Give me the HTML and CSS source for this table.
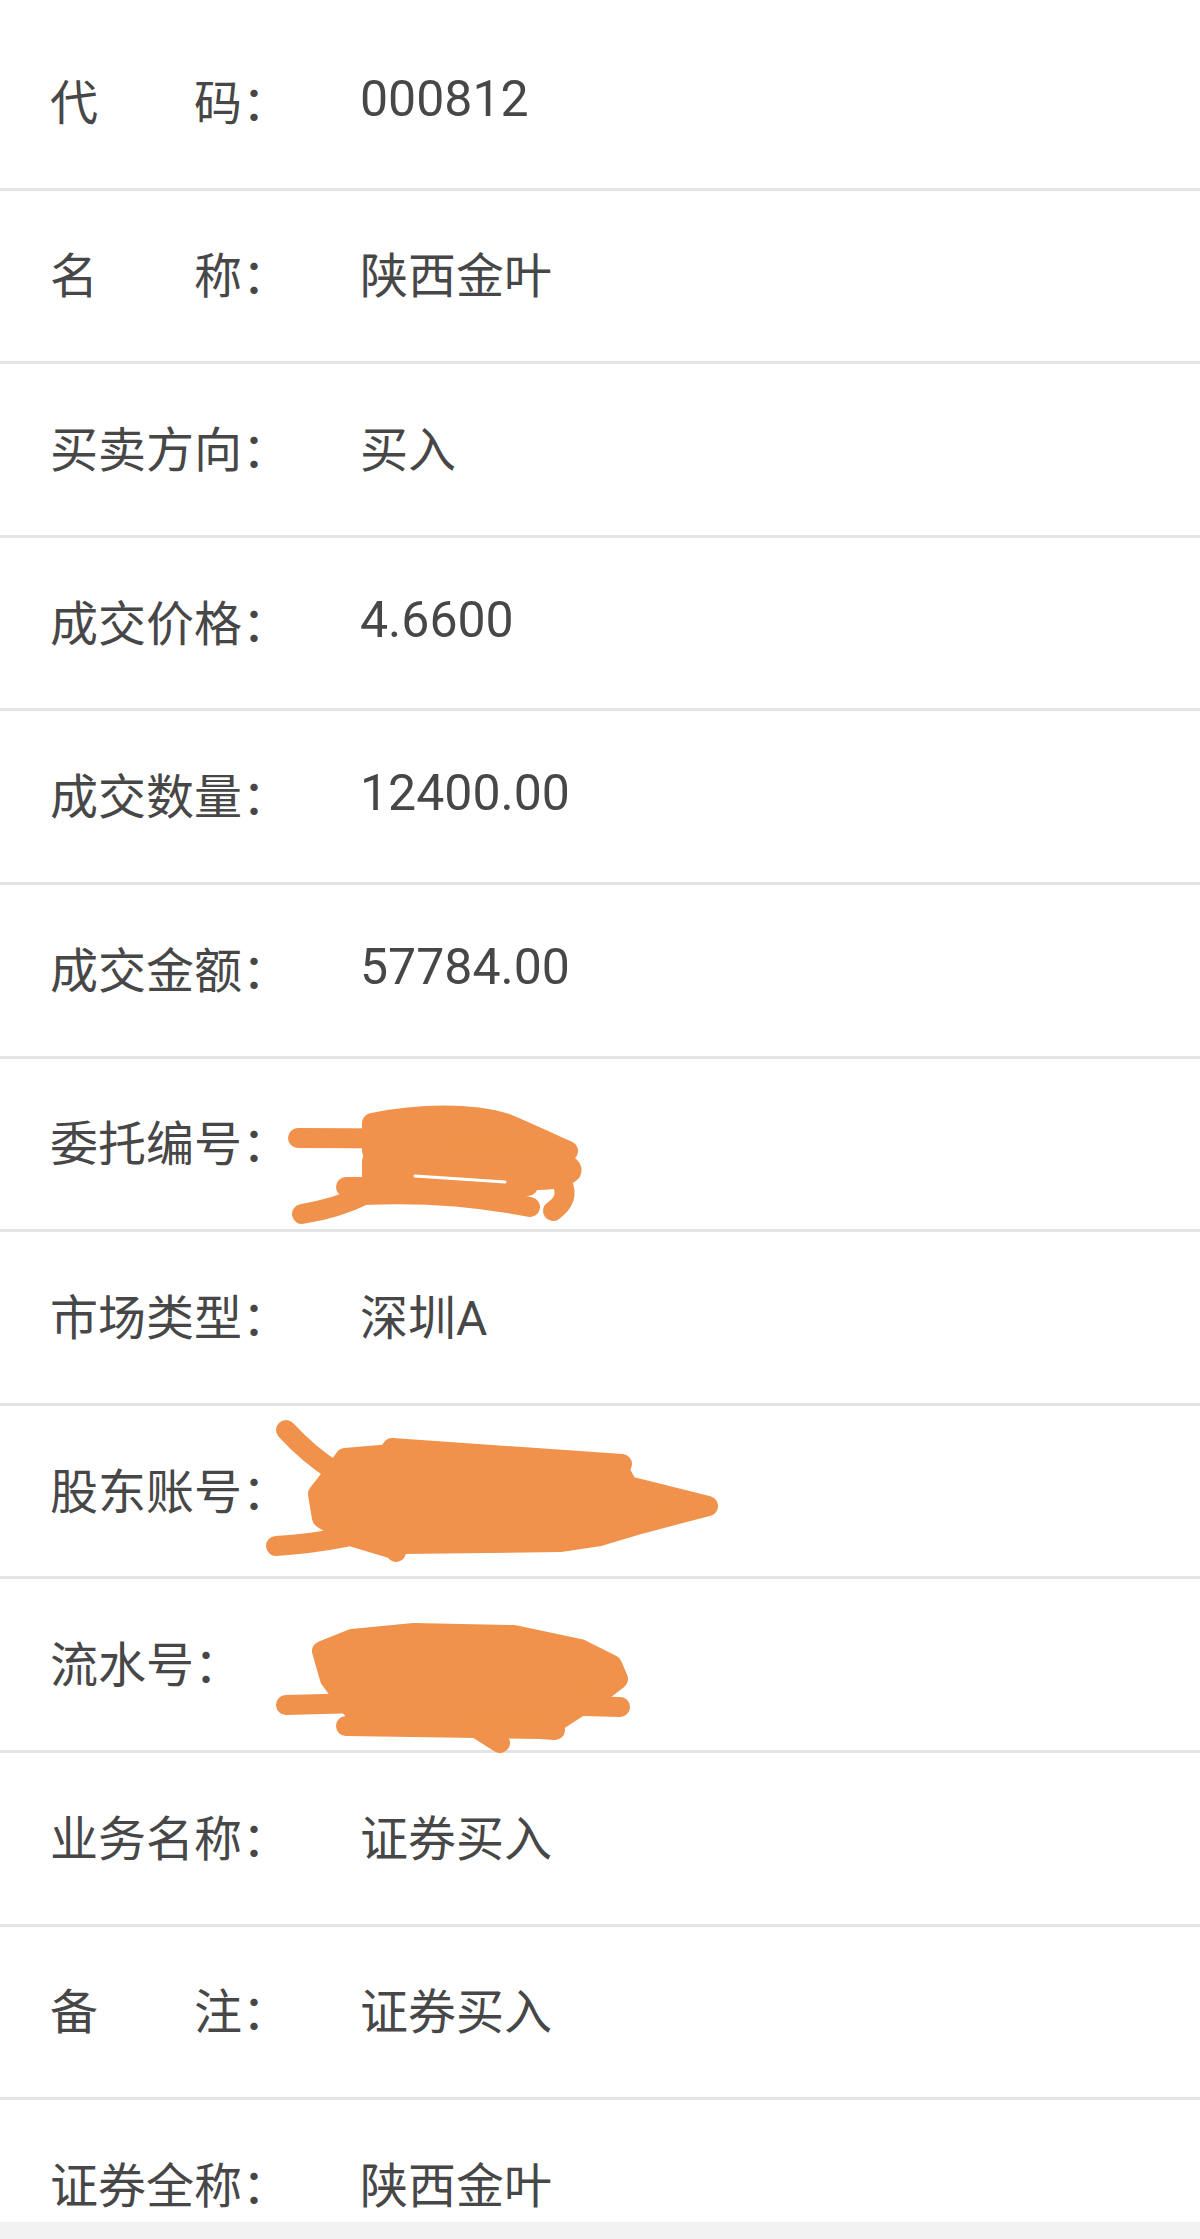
FILE: index.html
```html
<!DOCTYPE html>
<html lang="zh-CN">
<head>
<meta charset="utf-8">
<title>成交详情</title>
<link rel="stylesheet" href="styles.css">
</head>
<body>
<div class="screen">
  <div class="list">
    <div class="row"><span class="label">代　　码：</span><span class="value num">000812</span></div>
    <div class="row"><span class="label">名　　称：</span><span class="value">陕西金叶</span></div>
    <div class="row"><span class="label">买卖方向：</span><span class="value">买入</span></div>
    <div class="row"><span class="label">成交价格：</span><span class="value num">4.6600</span></div>
    <div class="row"><span class="label">成交数量：</span><span class="value num">12400.00</span></div>
    <div class="row"><span class="label">成交金额：</span><span class="value num">57784.00</span></div>
    <div class="row"><span class="label">委托编号：</span><span class="value"></span>
      <svg class="scribble" viewBox="0 0 1200 174" width="1200" height="174">
        <g fill="#f0924b" stroke="#f0924b" stroke-width="20" stroke-linecap="round" stroke-linejoin="round">
          <path fill="none" d="M298 79 L500 80"/>
          <path d="M372 64 C420 54 472 54 505 64 C525 72 545 82 568 92 L560 100 L372 92 Z"/>
          <path d="M372 102 L540 100 C560 102 574 106 571 113 C565 119 550 121 538 121 L372 117 Z"/>
          <path fill="none" d="M346 128 L528 127"/>
          <path fill="none" d="M302 155 Q338 149 364 136 Q450 132 530 148"/>
          <path fill="none" d="M562 124 Q570 140 553 152"/>
        </g>
        <path d="M415 117 L505 123" stroke="#ffffff" stroke-width="3" stroke-linecap="round" fill="none"/>
      </svg>
    </div>
    <div class="row"><span class="label">市场类型：</span><span class="value">深圳A</span></div>
    <div class="row"><span class="label">股东账号：</span><span class="value"></span>
      <svg class="scribble" viewBox="0 0 1200 174" width="1200" height="174">
        <g fill="#f0924b" stroke="#f0924b" stroke-width="20" stroke-linecap="round" stroke-linejoin="round">
          <path fill="none" d="M286 24 Q310 50 336 66"/>
          <path fill="none" d="M392 42 L622 58"/>
          <path d="M345 52 L392 48 L618 62 L628 80 L708 100 L640 118 L600 130 L560 136 L402 138 L390 142 L350 130 L322 112 L318 88 L332 70 Z"/>
          <path fill="none" d="M276 140 Q310 138 346 131"/>
          <path fill="none" d="M392 140 L396 146"/>
        </g>
      </svg>
    </div>
    <div class="row"><span class="label">流水号：</span><span class="value"></span>
      <svg class="scribble" viewBox="0 0 1200 174" width="1200" height="174">
        <g fill="#f0924b" stroke="#f0924b" stroke-width="20" stroke-linecap="round" stroke-linejoin="round">
          <path d="M322 72 L352 60 L414 54 L514 56 L580 70 L612 86 L618 100 L600 114 L560 140 L520 142 L360 140 L345 120 L330 100 Z"/>
          <path fill="none" d="M286 126 L360 124 L470 124 L620 128"/>
          <path fill="none" d="M346 147 L540 150 L555 151"/>
          <path fill="none" d="M478 150 L500 164"/>
        </g>
      </svg>
    </div>
    <div class="row"><span class="label">业务名称：</span><span class="value">证券买入</span></div>
    <div class="row"><span class="label">备　　注：</span><span class="value">证券买入</span></div>
    <div class="row"><span class="label">证券全称：</span><span class="value">陕西金叶</span></div>
  </div>
</div>
</body>
</html>
```
FILE: styles.css
```css
html, body {
  margin: 0;
  padding: 0;
}
body {
  background: #f2f2f2;
  font-family: Roboto, "Noto Sans CJK SC", sans-serif;
  color: #474747;
}
.screen {
  width: 1200px;
  height: 2239px;
  background: #f2f2f2;
}
.list {
  height: 2205px;
  padding-top: 17px;
  background: #ffffff;
  overflow: hidden;
}
.row {
  position: relative;
  box-sizing: border-box;
  display: flex;
  align-items: center;
  height: 173.6px;
  padding-left: 50px;
  padding-bottom: 7px;
  border-bottom: 3px solid #e4e4e4;
  font-size: 48px;
}
.label {
  width: 310px;
  flex: none;
  white-space: pre;
}
.value {
  flex: 1;
}
.num {
  font-size: 50px;
}
.scribble {
  position: absolute;
  left: 0;
  top: 0;
  pointer-events: none;
}
```
